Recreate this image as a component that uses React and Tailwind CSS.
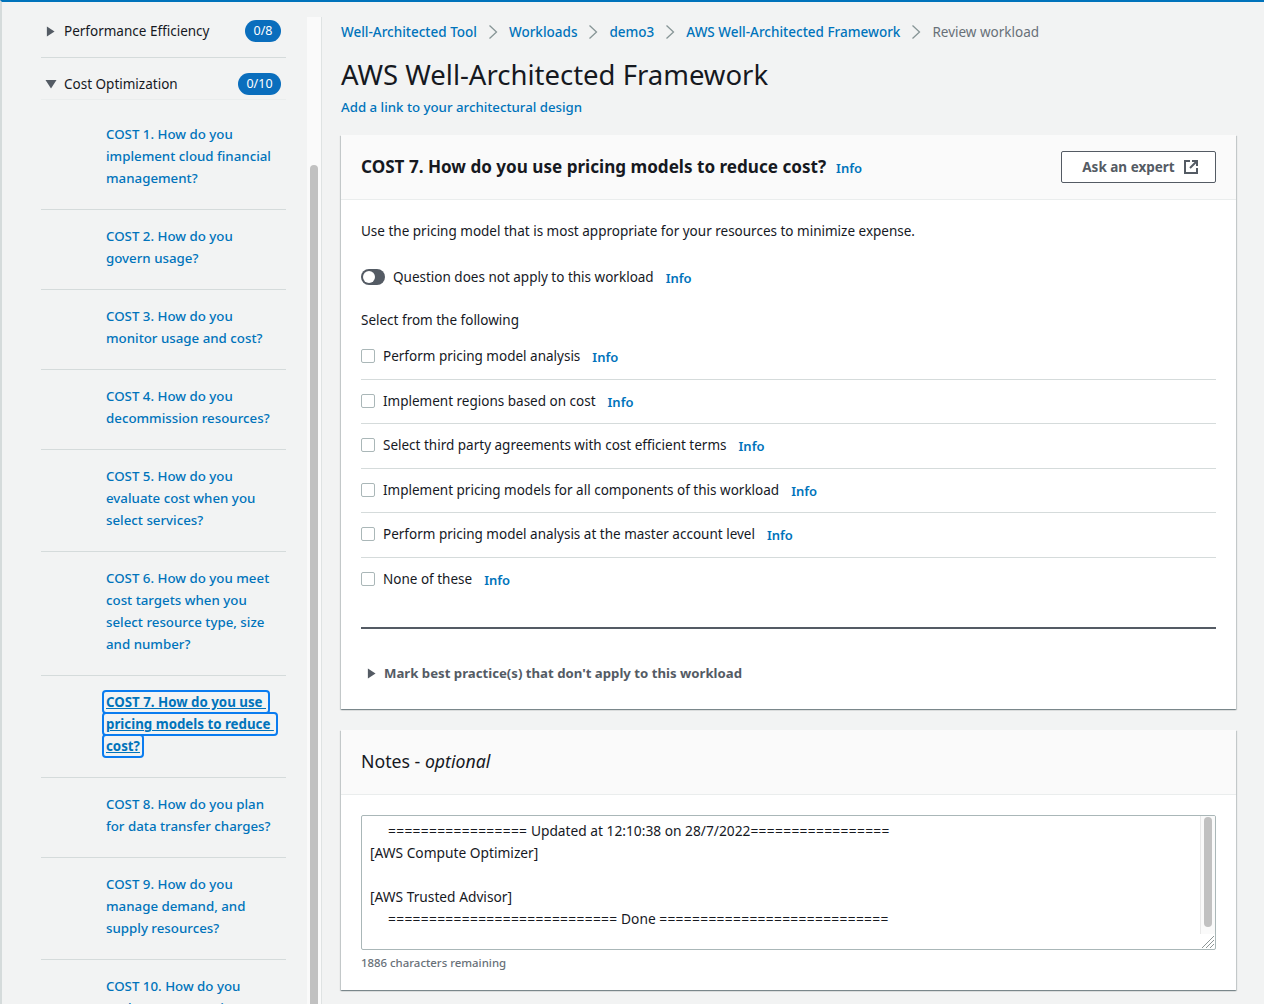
const costItems = [
  { lines: ['COST 1. How do you', 'implement cloud financial', 'management?'] },
  { lines: ['COST 2. How do you', 'govern usage?'] },
  { lines: ['COST 3. How do you', 'monitor usage and cost?'] },
  { lines: ['COST 4. How do you', 'decommission resources?'] },
  { lines: ['COST 5. How do you', 'evaluate cost when you', 'select services?'] },
  { lines: ['COST 6. How do you meet', 'cost targets when you', 'select resource type, size', 'and number?'] },
  { lines: ['COST 7. How do you use\u00a0', 'pricing models to reduce\u00a0', 'cost?'], active: true },
  { lines: ['COST 8. How do you plan', 'for data transfer charges?'] },
  { lines: ['COST 9. How do you', 'manage demand, and', 'supply resources?'] },
  { lines: ['COST 10. How do you', 'evaluate new services?'] },
];

const crumbs = ['Well-Architected Tool', 'Workloads', 'demo3', 'AWS Well-Architected Framework'];

const choices = [
  'Perform pricing model analysis',
  'Implement regions based on cost',
  'Select third party agreements with cost efficient terms',
  'Implement pricing models for all components of this workload',
  'Perform pricing model analysis at the master account level',
  'None of these',
];

const cardShadow = 'shadow-[0_1px_1px_0_rgba(0,28,36,0.3),1px_1px_1px_0_rgba(0,28,36,0.15),-1px_1px_1px_0_rgba(0,28,36,0.15)]';

const TriangleRight = ({ className }) => (
  <svg viewBox="0 0 10 12" className={className} fill="currentColor">
    <path d="M1 0.5L9.5 6L1 11.5Z" />
  </svg>
);

const TriangleDown = ({ className }) => (
  <svg viewBox="0 0 12 10" className={className} fill="currentColor">
    <path d="M0.5 1H11.5L6 9.5Z" />
  </svg>
);

const Chevron = () => (
  <svg viewBox="0 0 10 16" className="w-[10px] h-4 text-[#879596]" fill="none" stroke="currentColor" strokeWidth="1.3">
    <path d="M1.5 1.5L8.5 8L1.5 14.5" />
  </svg>
);

const ExternalIcon = () => (
  <svg viewBox="0 0 16 16" className="w-4 h-4" fill="none" stroke="currentColor" strokeWidth="2">
    <path d="M7 2H2V14H14V9" />
    <path d="M9 2H14V7" />
    <path d="M14 2L7 9" />
  </svg>
);

const Info = ({ className = '' }) => (
  <a className={`text-[#0073bb] font-semibold text-[13px] leading-[22px] relative top-px ${className}`}>Info</a>
);

const Pill = ({ children, width }) => (
  <span className={`${width} h-[22px] rounded-full bg-[#0a6ebd] text-white text-[12.5px] flex items-center justify-center`}>{children}</span>
);

const Sidebar = () => (
  <div className="w-[245px] shrink-0">
    <div className="box-content h-[22px] mt-[18px] pl-[5px] pr-[5px] pb-[15px] flex items-center justify-between border-b border-[#d5dbdb]">
      <div className="flex items-center">
        <TriangleRight className="w-[9px] h-[11px] text-[#545b64]" />
        <span className="ml-[9px] text-[#16191f]">Performance Efficiency</span>
      </div>
      <Pill width="w-[36px]">0/8</Pill>
    </div>
    <div className="box-content h-[22px] pl-[4px] pr-[5px] pt-[15px] pb-[4px] flex items-center justify-between border-b border-[#eaeded]">
      <div className="flex items-center">
        <TriangleDown className="w-[12px] h-[10px] text-[#545b64]" />
        <span className="ml-[7px] text-[#16191f]">Cost Optimization</span>
      </div>
      <Pill width="w-[43px]">0/10</Pill>
    </div>
    <div className="pt-[8px] text-[13.3px]">
      {costItems.map((item) => (
        <div key={item.lines[0]} className="pl-[65px] pt-[15px] pb-5 border-b border-[#d5dbdb]">
          {item.active ? (
            <a className="font-bold text-[#0073bb] underline leading-[22px]">
              {item.lines.map((line) => (
                <span key={line}>
                  <span className="border-2 border-[#0a7cf0] rounded-[4px] px-[2px] py-[1px] -ml-[4px]">{line}</span>
                  <br />
                </span>
              ))}
            </a>
          ) : (
            <a className="font-medium text-[#0073bb] leading-[22px] block whitespace-nowrap">
              {item.lines.map((line) => (
                <div key={line}>{line}</div>
              ))}
            </a>
          )}
        </div>
      ))}
    </div>
  </div>
);

const Scrollbar = () => (
  <div className="w-[15px] ml-[21px] mt-[15px] shrink-0 bg-[#fafafa] border-r border-[#dfe3e3] pt-[148px] pl-[3px]">
    <div className="w-2 h-[900px] rounded-full bg-[#c1c1c1]" />
  </div>
);

const QuestionCard = () => (
  <section className={`bg-white ${cardShadow}`}>
    <header className="h-[65px] px-5 flex items-center justify-between bg-[#fafafa] border-b border-[#eaeded]">
      <div className="flex items-center">
        <h2 className="text-[17.1px] font-bold text-[#16191f]">COST 7. How do you use pricing models to reduce cost?</h2>
        <Info className="ml-[10px]" />
      </div>
      <button className="w-[155px] h-8 pl-1 border border-[#545b64] rounded-[2px] bg-white text-[#545b64] font-bold flex items-center justify-center gap-2">
        Ask an expert
        <ExternalIcon />
      </button>
    </header>
    <div className="px-5 h-[509px]">
      <p className="pt-[20px] leading-[22px] text-[#16191f]">Use the pricing model that is most appropriate for your resources to minimize expense.</p>
      <div className="mt-[24px] flex items-center h-[22px]">
        <span className="w-6 h-4 rounded-full bg-[#545b64] flex items-center pl-[2px]">
          <span className="w-3 h-3 rounded-full bg-white" />
        </span>
        <span className="ml-2 text-[#16191f]">Question does not apply to this workload</span>
        <Info className="ml-3" />
      </div>
      <p className="mt-[21px] leading-[22px] text-[#16191f]">Select from the following</p>
      <div className="mt-[4px]">
        {choices.map((choice, i) => (
          <div key={choice} className={`h-[44.5px] pb-[1px] flex items-center ${i < choices.length - 1 ? 'border-b border-[#d5dbdb]' : ''}`}>
            <span className="w-[14px] h-[14px] rounded-[2px] border border-[#aab7b8] bg-white shrink-0" />
            <span className="ml-2 text-[#16191f]">{choice}</span>
            <Info className="ml-3" />
          </div>
        ))}
      </div>
      <div className="mt-[25px] border-t-2 border-[#545b64]" />
      <div className="mt-[33px] pl-[6px] flex items-center text-[#545b64]">
        <TriangleRight className="w-[9px] h-[11px]" />
        <span className="ml-2 font-bold text-[13.2px]">Mark best practice(s) that don't apply to this workload</span>
      </div>
    </div>
  </section>
);

const Equals = ({ count }) => <span className="tracking-[0.33px]">{'='.repeat(count)}</span>;

const NotesCard = () => (
  <section className={`mt-[21px] bg-white ${cardShadow}`}>
    <header className="h-[65px] px-5 pb-[2px] flex items-center bg-[#fafafa] border-b border-[#eaeded]">
      <h2 className="text-[17.7px] text-[#16191f]">Notes - <em>optional</em></h2>
    </header>
    <div className="px-5 pt-5 h-[195px]">
      <div className="relative h-[135px] border border-[#aab7b8] rounded-[2px] px-2 py-1 text-[13.75px] text-[#16191f] leading-[22px] whitespace-pre overflow-hidden">
        <div className="pl-[18px]"><Equals count={17} /> Updated at 12:10:38 on 28/7/2022<Equals count={17} /></div>
        <div>[AWS Compute Optimizer]</div>
        <div>&nbsp;</div>
        <div>[AWS Trusted Advisor]</div>
        <div className="pl-[18px]"><Equals count={28} /> Done <Equals count={28} /></div>
        <div className="absolute top-0 right-0 bottom-[15px] w-[15px] bg-[#fafafa] border-l border-[#e8e8e8] pl-[3px] pt-[1px]">
          <div className="w-2 h-[110px] rounded-full bg-[#c1c1c1]" />
        </div>
        <svg viewBox="0 0 14 14" className="absolute right-0 bottom-0 w-[14px] h-[14px] text-[#8d9696]" fill="none" stroke="currentColor" strokeWidth="1">
          <path d="M1 13L13 1M5 13L13 5M9 13L13 9" />
        </svg>
      </div>
      <p className="mt-[3px] text-[11.4px] leading-[20px] font-medium text-[#687078]">1886 characters remaining</p>
    </div>
  </section>
);

export default function App() {
  return (
    <div
      className="h-screen overflow-hidden flex bg-[#f2f3f3] border-t-2 border-l-2 border-t-[#0073bb] border-l-[#d5dbdb] text-[13.5px] leading-[22px]"
      style={{ fontFamily: '"Noto Sans", sans-serif' }}
    >
      <div className="flex shrink-0 pl-[39px]">
        <Sidebar />
        <Scrollbar />
      </div>
      <main className="ml-[19px] w-[895px] shrink-0">
        <nav className="mt-[19px] flex items-center gap-[11px] h-[22px]">
          {crumbs.map((crumb) => (
            <div key={crumb} className="flex items-center gap-[11px]">
              <a className="text-[#0073bb] font-medium">{crumb}</a>
              <Chevron />
            </div>
          ))}
          <span className="text-[#687078]">Review workload</span>
        </nav>
        <h1 className="mt-[14px] text-[27.5px] leading-[36px] text-[#16191f]">AWS Well-Architected Framework</h1>
        <a className="block mt-[3px] text-[13.25px] text-[#0073bb] font-medium">Add a link to your architectural design</a>
        <div className="mt-[17px]">
          <QuestionCard />
          <NotesCard />
        </div>
      </main>
    </div>
  );
}
